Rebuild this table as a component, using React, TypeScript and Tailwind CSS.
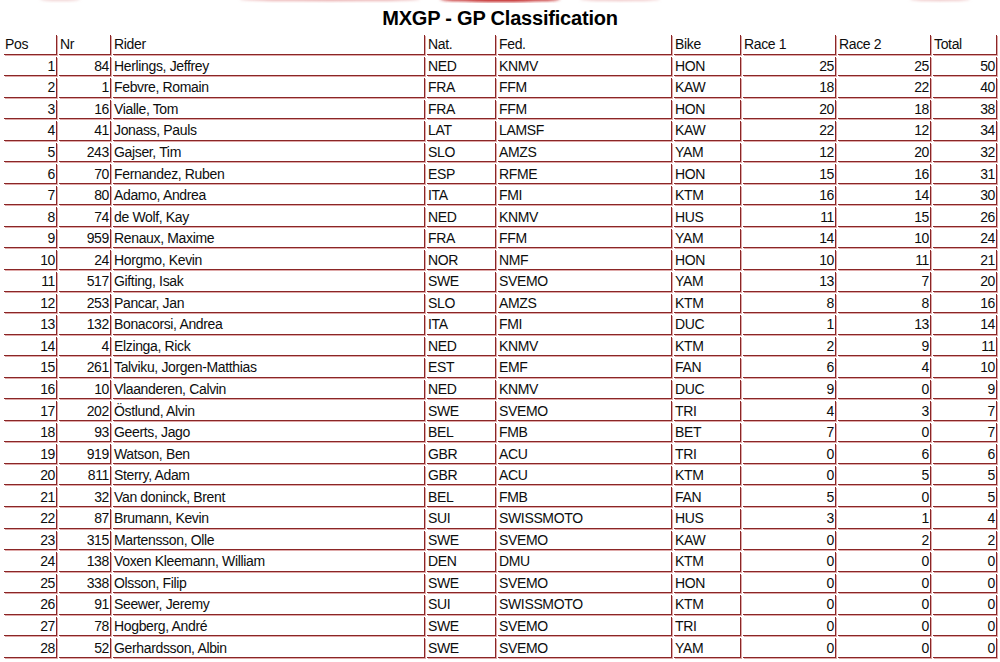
const columns = [
  { label: 'Pos', w: 'w-[53px]', right: true },
  { label: 'Nr', w: 'w-[52px]', right: true },
  { label: 'Rider', w: 'w-[312px]', right: false },
  { label: 'Nat.', w: 'w-[69px]', right: false },
  { label: 'Fed.', w: 'w-[174px]', right: false },
  { label: 'Bike', w: 'w-[67px]', right: false },
  { label: 'Race 1', w: 'w-[93px]', right: true },
  { label: 'Race 2', w: 'w-[93px]', right: true },
  { label: 'Total', w: 'w-[64px]', right: true },
];

const rows: (string | number)[][] = [
  [1, 84, 'Herlings, Jeffrey', 'NED', 'KNMV', 'HON', 25, 25, 50],
  [2, 1, 'Febvre, Romain', 'FRA', 'FFM', 'KAW', 18, 22, 40],
  [3, 16, 'Vialle, Tom', 'FRA', 'FFM', 'HON', 20, 18, 38],
  [4, 41, 'Jonass, Pauls', 'LAT', 'LAMSF', 'KAW', 22, 12, 34],
  [5, 243, 'Gajser, Tim', 'SLO', 'AMZS', 'YAM', 12, 20, 32],
  [6, 70, 'Fernandez, Ruben', 'ESP', 'RFME', 'HON', 15, 16, 31],
  [7, 80, 'Adamo, Andrea', 'ITA', 'FMI', 'KTM', 16, 14, 30],
  [8, 74, 'de Wolf, Kay', 'NED', 'KNMV', 'HUS', 11, 15, 26],
  [9, 959, 'Renaux, Maxime', 'FRA', 'FFM', 'YAM', 14, 10, 24],
  [10, 24, 'Horgmo, Kevin', 'NOR', 'NMF', 'HON', 10, 11, 21],
  [11, 517, 'Gifting, Isak', 'SWE', 'SVEMO', 'YAM', 13, 7, 20],
  [12, 253, 'Pancar, Jan', 'SLO', 'AMZS', 'KTM', 8, 8, 16],
  [13, 132, 'Bonacorsi, Andrea', 'ITA', 'FMI', 'DUC', 1, 13, 14],
  [14, 4, 'Elzinga, Rick', 'NED', 'KNMV', 'KTM', 2, 9, 11],
  [15, 261, 'Talviku, Jorgen-Matthias', 'EST', 'EMF', 'FAN', 6, 4, 10],
  [16, 10, 'Vlaanderen, Calvin', 'NED', 'KNMV', 'DUC', 9, 0, 9],
  [17, 202, 'Östlund, Alvin', 'SWE', 'SVEMO', 'TRI', 4, 3, 7],
  [18, 93, 'Geerts, Jago', 'BEL', 'FMB', 'BET', 7, 0, 7],
  [19, 919, 'Watson, Ben', 'GBR', 'ACU', 'TRI', 0, 6, 6],
  [20, 811, 'Sterry, Adam', 'GBR', 'ACU', 'KTM', 0, 5, 5],
  [21, 32, 'Van doninck, Brent', 'BEL', 'FMB', 'FAN', 5, 0, 5],
  [22, 87, 'Brumann, Kevin', 'SUI', 'SWISSMOTO', 'HUS', 3, 1, 4],
  [23, 315, 'Martensson, Olle', 'SWE', 'SVEMO', 'KAW', 0, 2, 2],
  [24, 138, 'Voxen Kleemann, William', 'DEN', 'DMU', 'KTM', 0, 0, 0],
  [25, 338, 'Olsson, Filip', 'SWE', 'SVEMO', 'HON', 0, 0, 0],
  [26, 91, 'Seewer, Jeremy', 'SUI', 'SWISSMOTO', 'KTM', 0, 0, 0],
  [27, 78, 'Hogberg, André', 'SWE', 'SVEMO', 'TRI', 0, 0, 0],
  [28, 52, 'Gerhardsson, Albin', 'SWE', 'SVEMO', 'YAM', 0, 0, 0],
];

function Cell({ w, right, children }: { w: string; right: boolean; children: React.ReactNode }) {
  return (
    <div
      className={`${w} h-[19.55px] shrink-0 flex items-center px-px border-r border-b border-[#8a2626] shadow-[1px_1px_0_#dfa9a9] ${
        right ? 'justify-end' : 'justify-start'
      }`}
    >
      {children}
    </div>
  );
}

export default function App() {
  return (
    <div className="w-[1000px] h-[662px] overflow-hidden bg-white text-[#0d0d0d] font-['Liberation_Sans',Arial,sans-serif]">
      {/* faded banner edge at the top */}
      <svg width="1000" height="3" className="block">
        <defs>
          <filter id="blur" x="-20%" y="-200%" width="140%" height="500%">
            <feGaussianBlur stdDeviation="1.5" />
          </filter>
        </defs>
        <g filter="url(#blur)">
          <ellipse cx="500" cy="-1" rx="60" ry="3" fill="#c42a2a" />
          <ellipse cx="330" cy="-1" rx="90" ry="2" fill="#e7a5a5" />
          <ellipse cx="620" cy="-1" rx="40" ry="2" fill="#efc4c4" />
          <ellipse cx="60" cy="-1" rx="20" ry="2" fill="#f0d0d0" />
          <ellipse cx="940" cy="-1" rx="30" ry="2" fill="#eec4c4" />
        </g>
      </svg>

      <h1 className="h-[30px] flex items-center justify-center text-[20px] tracking-[-0.2px] font-bold text-black">
        MXGP - GP Classification
      </h1>

      <div className="flex flex-col gap-[2px] pl-[4px] pt-[2px] text-[14px] tracking-[-0.35px] leading-none">
        <div className="flex gap-[2px]">
          {columns.map((c) => (
            <Cell key={c.label} w={c.w} right={false}>
              {c.label}
            </Cell>
          ))}
        </div>
        {rows.map((r) => (
          <div key={r[0]} className="flex gap-[2px]">
            {r.map((v, i) => (
              <Cell key={i} w={columns[i].w} right={columns[i].right}>
                {v}
              </Cell>
            ))}
          </div>
        ))}
      </div>
    </div>
  );
}
